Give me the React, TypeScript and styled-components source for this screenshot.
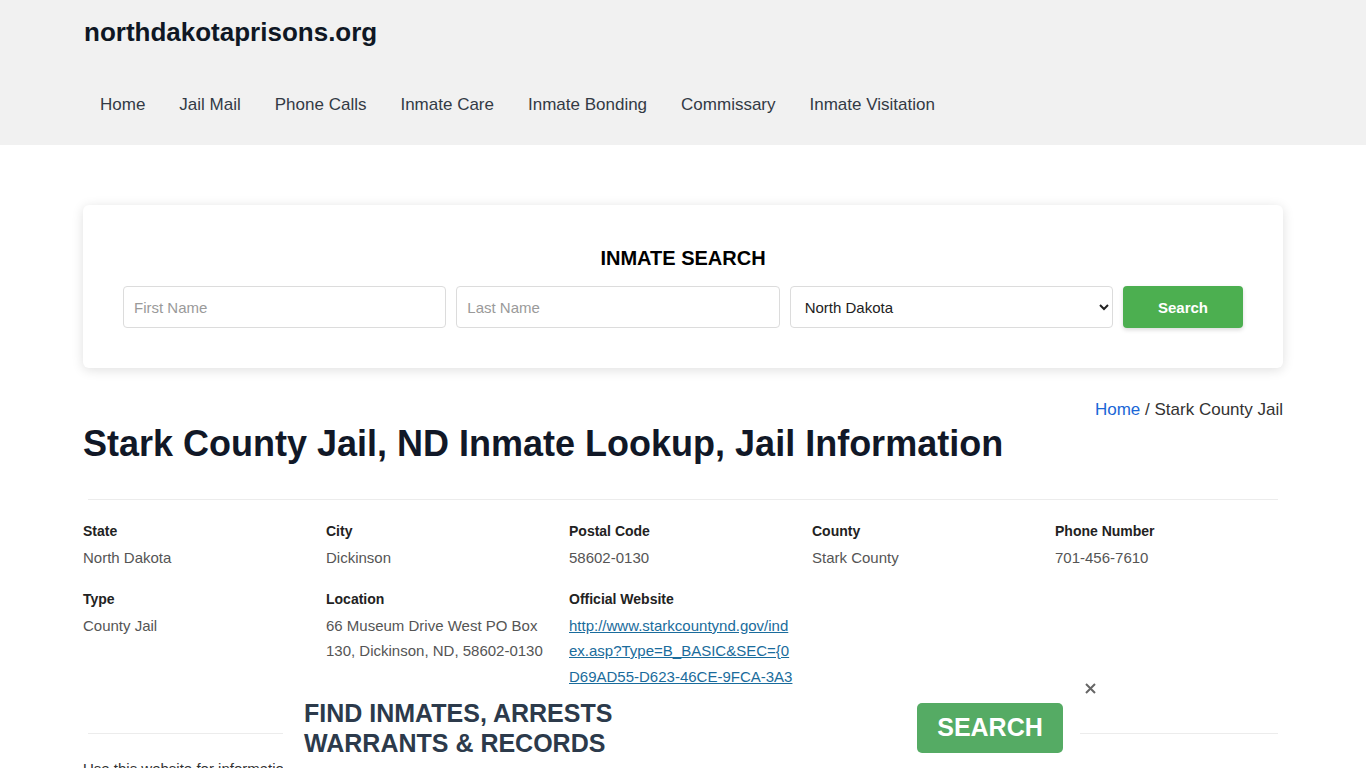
import React from "react";
import styled, { createGlobalStyle } from "styled-components";

const GlobalStyle = createGlobalStyle`
  * {
    box-sizing: border-box;
    margin: 0;
    padding: 0;
  }
  body {
    font-family: "Liberation Sans", Arial, sans-serif;
    background: #ffffff;
    color: #212529;
  }
`;

const Container = styled.div`
  width: 1200px;
  margin: 0 auto;
`;

const Header = styled.header`
  background: #f1f1f1;
  padding: 15px 0 16px;
`;

const Logo = styled.a`
  display: block;
  font-size: 26px;
  line-height: 34px;
  font-weight: 700;
  color: #0f1724;
  text-decoration: none;
  margin-left: 1px;
`;

const Nav = styled.nav`
  display: flex;
  margin-top: 32px;
`;

const NavLink = styled.a`
  font-size: 17px;
  line-height: 24px;
  padding: 12px 17px;
  color: #333a45;
  text-decoration: none;
`;

const SearchCard = styled.section`
  margin-top: 60px;
  background: #fff;
  border-radius: 6px;
  box-shadow: 0 2px 12px rgba(0, 0, 0, 0.13);
  padding: 41px 40px 40px;
`;

const SearchTitle = styled.h2`
  text-align: center;
  font-size: 20px;
  line-height: 24px;
  font-weight: 700;
  color: #000;
  margin-bottom: 16px;
`;

const SearchRow = styled.div`
  display: grid;
  grid-template-columns: 1fr 1fr 1fr 120px;
  gap: 10px;
`;

const TextInput = styled.input`
  height: 42px;
  border: 1px solid #dcdcdc;
  border-radius: 4px;
  padding: 0 10px;
  font-family: "Liberation Sans", Arial, sans-serif;
  font-size: 15px;
  color: #333;
  &::placeholder {
    color: #9a9a9a;
  }
`;

const StateSelect = styled.select`
  height: 42px;
  border: 1px solid #dcdcdc;
  border-radius: 4px;
  padding: 0 10px;
  font-family: "Liberation Sans", Arial, sans-serif;
  font-size: 15px;
  color: #222;
  background: #fff;
`;

const SearchButton = styled.button`
  height: 42px;
  border: none;
  border-radius: 4px;
  background: #4caf50;
  color: #fff;
  font-family: "Liberation Sans", Arial, sans-serif;
  font-size: 15px;
  font-weight: 700;
  box-shadow: 0 2px 4px rgba(0, 0, 0, 0.15);
`;

const Breadcrumb = styled.div`
  margin-top: 30px;
  text-align: right;
  font-size: 17px;
  line-height: 24px;
  color: #333;
`;

const CrumbLink = styled.a`
  color: #1a66d6;
  text-decoration: none;
`;

const PageTitle = styled.h1`
  margin-top: 2px;
  font-size: 36px;
  line-height: 40px;
  font-weight: 700;
  color: #111827;
`;

const Divider = styled.hr<{ $top: number }>`
  border: none;
  border-top: 1px solid #ececec;
  margin: ${(p) => p.$top}px 5px 0;
`;

const InfoGrid = styled.div`
  display: grid;
  grid-template-columns: repeat(5, 226px);
  column-gap: 17px;
  row-gap: 18px;
  margin-top: 21px;
`;

const InfoItem = styled.div`
  display: flex;
  flex-direction: column;
  gap: 4px;
`;

const Label = styled.div`
  font-size: 14px;
  line-height: 20px;
  font-weight: 700;
  color: #222;
`;

const Value = styled.div`
  font-size: 15px;
  line-height: 25.5px;
  color: #555;
`;

const ValueLink = styled.a`
  font-size: 15px;
  line-height: 25.5px;
  color: #1a6c9c;
  text-decoration: underline;
  word-break: break-all;
`;

const Intro = styled.p`
  margin-top: 22px;
  font-size: 15px;
  line-height: 25px;
  color: #333333;
`;

const Banner = styled.div`
  position: fixed;
  bottom: 0;
  left: 283px;
  width: 797px;
  height: 77px;
  background: #fff;
  display: flex;
  align-items: center;
  justify-content: space-between;
  padding: 0 17px 4px 21px;
`;

const BannerText = styled.div`
  font-size: 25px;
  line-height: 30px;
  font-weight: 700;
  color: #2c3a4b;
`;

const BannerButton = styled.button`
  width: 146px;
  height: 50px;
  border: none;
  border-radius: 5px;
  background: #55ab64;
  color: #fff;
  font-family: "Liberation Sans", Arial, sans-serif;
  font-size: 25px;
  font-weight: 700;
`;

const CloseButton = styled.button`
  position: fixed;
  left: 1082px;
  bottom: 72px;
  width: 16px;
  height: 16px;
  border: none;
  background: transparent;
  display: flex;
  align-items: center;
  justify-content: center;
`;

const navItems = [
  "Home",
  "Jail Mail",
  "Phone Calls",
  "Inmate Care",
  "Inmate Bonding",
  "Commissary",
  "Inmate Visitation",
];

export default function App() {
  return (
    <>
      <GlobalStyle />
      <Header>
        <Container>
          <Logo href="#">northdakotaprisons.org</Logo>
          <Nav>
            {navItems.map((item) => (
              <NavLink key={item} href="#">
                {item}
              </NavLink>
            ))}
          </Nav>
        </Container>
      </Header>

      <Container>
        <SearchCard>
          <SearchTitle>INMATE SEARCH</SearchTitle>
          <SearchRow>
            <TextInput placeholder="First Name" />
            <TextInput placeholder="Last Name" />
            <StateSelect defaultValue="North Dakota">
              <option>North Dakota</option>
            </StateSelect>
            <SearchButton>Search</SearchButton>
          </SearchRow>
        </SearchCard>

        <Breadcrumb>
          <CrumbLink href="#">Home</CrumbLink> / Stark County Jail
        </Breadcrumb>
        <PageTitle>Stark County Jail, ND Inmate Lookup, Jail Information</PageTitle>

        <Divider $top={35} />

        <InfoGrid>
          <InfoItem>
            <Label>State</Label>
            <Value>North Dakota</Value>
          </InfoItem>
          <InfoItem>
            <Label>City</Label>
            <Value>Dickinson</Value>
          </InfoItem>
          <InfoItem>
            <Label>Postal Code</Label>
            <Value>58602-0130</Value>
          </InfoItem>
          <InfoItem>
            <Label>County</Label>
            <Value>Stark County</Value>
          </InfoItem>
          <InfoItem>
            <Label>Phone Number</Label>
            <Value>701-456-7610</Value>
          </InfoItem>
          <InfoItem>
            <Label>Type</Label>
            <Value>County Jail</Value>
          </InfoItem>
          <InfoItem>
            <Label>Location</Label>
            <Value>66 Museum Drive West PO Box 130, Dickinson, ND, 58602-0130</Value>
          </InfoItem>
          <InfoItem>
            <Label>Official Website</Label>
            <ValueLink href="#">
              http://www.starkcountynd.gov/index.asp?Type=B_BASIC&amp;SEC=&#123;0D69AD55-D623-46CE-9FCA-3A3E5F1B2C4D&#125;
            </ValueLink>
          </InfoItem>
        </InfoGrid>

        <Divider $top={18} />

        <Intro>
          Use this website for information about Stark County Jail, how to find an inmate, send mail, make phone calls and
          schedule a visitation.
        </Intro>
      </Container>

      <Banner>
        <BannerText>
          FIND INMATES, ARRESTS
          <br />
          WARRANTS &amp; RECORDS
        </BannerText>
        <BannerButton>SEARCH</BannerButton>
      </Banner>
      <CloseButton aria-label="close">
        <svg width="11" height="11" viewBox="0 0 11 11">
          <path d="M1 1 L10 10 M10 1 L1 10" stroke="#666" strokeWidth="2" />
        </svg>
      </CloseButton>
    </>
  );
}
